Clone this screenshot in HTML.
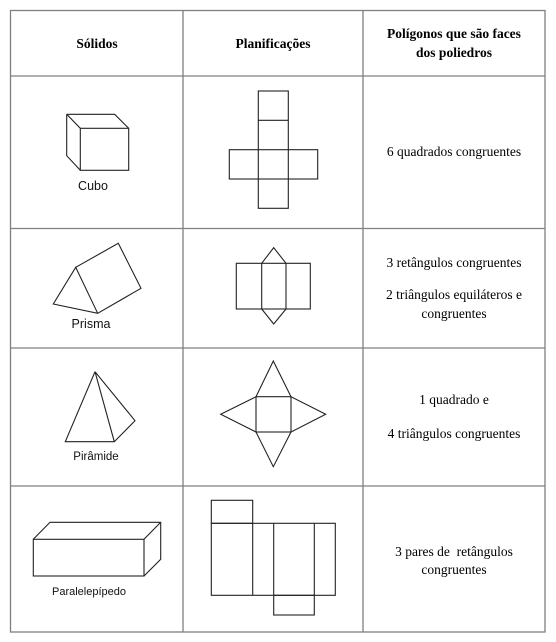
<!DOCTYPE html>
<html><head><meta charset="utf-8"><style>
html,body{margin:0;padding:0;background:#fff;width:556px;height:642px;overflow:hidden}
svg{display:block}
.s{font-family:"Liberation Serif",serif;font-size:13.5px;fill:#000}
.b{font-weight:bold}
.a{font-family:"Liberation Sans",sans-serif;fill:#111}
</style></head><body>
<svg width="556" height="642" viewBox="0 0 556 642" xmlns="http://www.w3.org/2000/svg">
<g stroke="#808080" stroke-width="1.3" fill="none">
<rect x="10.5" y="10.5" width="534.5" height="621.5"/>
<line x1="183" y1="10" x2="183" y2="632"/>
<line x1="363" y1="10" x2="363" y2="632"/>
<line x1="10" y1="76" x2="545" y2="76"/>
<line x1="10" y1="228.5" x2="545" y2="228.5"/>
<line x1="10" y1="348" x2="545" y2="348"/>
<line x1="10" y1="486" x2="545" y2="486"/>
</g>
<g text-anchor="middle" class="s">
<text x="97" y="48" class="s b">Sólidos</text>
<text x="273" y="48" class="s b">Planificações</text>
<text x="454" y="38" class="s b">Polígonos que são faces</text>
<text x="454" y="57" class="s b">dos poliedros</text>
<text x="454" y="156">6 quadrados congruentes</text>
<text x="454" y="267">3 retângulos congruentes</text>
<text x="454" y="299">2 triângulos equiláteros e</text>
<text x="454" y="318">congruentes</text>
<text x="454" y="404">1 quadrado e</text>
<text x="454" y="438">4 triângulos congruentes</text>
<text x="454" y="556">3 pares de&#160; retângulos</text>
<text x="454" y="574">congruentes</text>
</g>
<g stroke="#222" stroke-width="1.1" fill="none">
<path d="M66.7 114.3H114.7L128.7 128.3M66.7 114.3L80.3 128.3M66.7 114.3V155.7L80.3 170.3"/>
<rect x="80.3" y="128.3" width="48.4" height="42"/>
<rect x="258.3" y="91" width="30" height="117.3"/>
<path d="M258.3 120.3H288.3"/>
<rect x="229.3" y="149.7" width="88.4" height="29.3"/>
<path d="M75.7 267.3L118.3 243.3L141 288.3L97.7 313.3L53.3 304L75.7 267.3L97.7 313.3"/>
<rect x="236.3" y="263.3" width="74" height="45.7"/>
<path d="M261.7 263.3V309M286 263.3V309M261.7 263.3L273.7 247.7L286 263.3M261.7 309L273.7 324L286 309"/>
<path d="M95 371.7L65.3 441.7H114.3L135 420.7L95 371.7L114.3 441.7"/>
<rect x="256" y="396.7" width="35" height="35.3"/>
<path d="M256 396.7L273.3 361L291 396.7L325.7 414.3L291 432L273.3 466.7L256 432L220.7 414.3Z"/>
<rect x="33.3" y="539.3" width="110.7" height="36.7"/>
<path d="M33.3 539.3L50 522.3H160.7V559.3L144 576M144 539.3L160.7 522.3"/>
<rect x="211.3" y="500.3" width="41.4" height="23"/>
<rect x="211.3" y="523.3" width="124" height="72"/>
<path d="M252.7 523.3V595.3M273.7 523.3V595.3M314.3 523.3V595.3"/>
<rect x="273.7" y="595.3" width="40.6" height="19.7"/>
</g>
<g class="a" text-anchor="middle">
<text x="93" y="190" font-size="12.5">Cubo</text>
<text x="91" y="328" font-size="12.5">Prisma</text>
<text x="96" y="460" font-size="11.5">Pirâmide</text>
<text x="89" y="595" font-size="11">Paralelepípedo</text>
</g>
</svg>
</body></html>
